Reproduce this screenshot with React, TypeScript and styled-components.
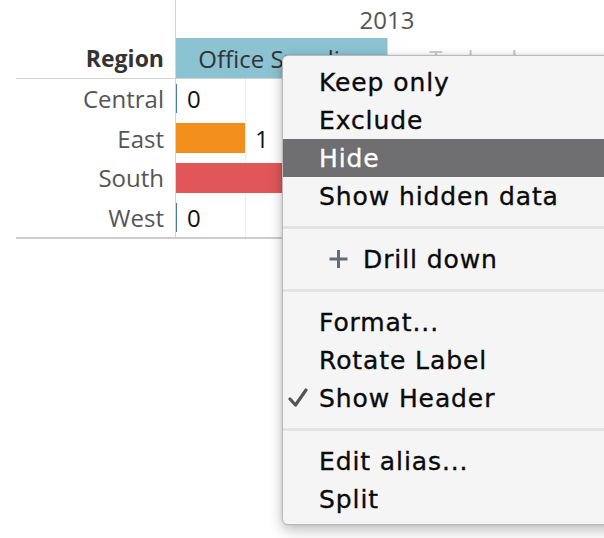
import React from "react";
import styled, { createGlobalStyle } from "styled-components";

const Global = createGlobalStyle`
  html, body { margin: 0; padding: 0; background: #fff; }
  body { font-family: "Open Sans", "Liberation Sans", sans-serif; }
`;

const Stage = styled.div`
  position: relative;
  width: 604px;
  height: 538px;
  overflow: hidden;
  background: #fff;
`;

const Chart = styled.div`
  display: flex;
  flex-direction: column;
  margin-left: 16px;
  width: 588px;
`;

const Row = styled.div<{ $h: number; $line?: boolean }>`
  display: flex;
  height: ${(p) => p.$h}px;
  box-sizing: content-box;
  border-bottom: ${(p) => (p.$line ? "1px solid #d2d2d2" : "none")};
`;

const Body = styled.div`
  display: flex;
  flex-direction: column;
  border-bottom: 2px solid #cdcdcd;
`;

const LabelCell = styled.div<{ $bold?: boolean }>`
  width: 160px;
  flex: none;
  box-sizing: border-box;
  border-right: 1px solid #d4d4d4;
  display: flex;
  align-items: center;
  justify-content: flex-end;
  padding-right: 11px;
  font-size: ${(p) => (p.$bold ? "23px" : "24px")};
  font-weight: ${(p) => (p.$bold ? 700 : 400)};
  color: ${(p) => (p.$bold ? "#333" : "#555")};
`;

const YearCell = styled.div`
  width: 422px;
  display: flex;
  align-items: center;
  justify-content: center;
  font-size: 24px;
  color: #555;
`;

const HeaderCell = styled.div<{ $selected?: boolean }>`
  width: 211px;
  flex: none;
  box-sizing: border-box;
  display: flex;
  align-items: center;
  justify-content: center;
  font-size: 24px;
  background: ${(p) => (p.$selected ? "#8bc3d3" : "#fff")};
  color: ${(p) => (p.$selected ? "#333" : "#c9c9c9")};
  border-left: ${(p) => (p.$selected ? "none" : "1px solid #d8d8d8")};
`;

const Pane = styled.div`
  width: 211px;
  flex: none;
  display: flex;
  align-items: center;
  background-image: linear-gradient(
    to right,
    transparent 69px,
    #ececec 69px,
    #ececec 70px,
    transparent 70px
  );
  background-size: 70px 100%;
`;

const EmptyPane = styled.div`
  width: 211px;
  flex: none;
  box-sizing: border-box;
  border-left: 1px solid #e4e4e4;
`;

const Bar = styled.div<{ $color: string }>`
  height: 30px;
  flex: none;
  background: ${(p) => p.$color};
`;

const Tick = styled.div`
  width: 1px;
  height: 29px;
  flex: none;
  background: #4e79a7;
`;

const Value = styled.span`
  margin-left: 10px;
  font-size: 24px;
  color: #111;
`;

const Menu = styled.div`
  position: absolute;
  left: 282px;
  top: 55px;
  width: 340px;
  box-sizing: border-box;
  padding: 7px 0 6px;
  background: #f5f5f5;
  border: 1px solid #b9b9b9;
  border-radius: 6px;
  box-shadow: 0 5px 14px rgba(0, 0, 0, 0.26), 0 0 3px rgba(0, 0, 0, 0.12);
  font-family: "DejaVu Sans", Verdana, sans-serif;
`;

const Item = styled.div<{ $active?: boolean }>`
  display: flex;
  align-items: center;
  height: 38px;
  background: ${(p) => (p.$active ? "#6f6e70" : "transparent")};
  color: ${(p) => (p.$active ? "#fff" : "#0a0a0a")};
  font-size: 25px;
  letter-spacing: 0.9px;
  -webkit-text-stroke: 0.35px currentColor;
  white-space: nowrap;
`;

const Gutter = styled.span`
  width: 36px;
  flex: none;
  box-sizing: border-box;
  padding-left: 5px;
  display: flex;
  align-items: center;
`;

const PlusSlot = styled.span`
  display: flex;
  align-items: center;
  margin-left: 10px;
  margin-right: 15px;
`;

const Separator = styled.div`
  height: 3px;
  margin: 11px 0;
  background: #e3e3e3;
`;

const rows: { name: string; value: number; color?: string }[] = [
  { name: "Central", value: 0 },
  { name: "East", value: 1, color: "#f28e1c" },
  { name: "South", value: 2, color: "#e15759" },
  { name: "West", value: 0 },
];

const Check = () => (
  <svg width="20" height="20" viewBox="0 0 20 20">
    <path d="M2 11 L7.5 17 L18 2" fill="none" stroke="#555" strokeWidth="3.2" strokeLinejoin="round" strokeLinecap="round" />
  </svg>
);

const Plus = () => (
  <svg width="19" height="18" viewBox="0 0 19 18">
    <path d="M0.5 9 H18.5 M9.5 0 V18" stroke="#656b74" strokeWidth="3" />
  </svg>
);

export default function App() {
  return (
    <Stage>
      <Global />
      <Chart>
        <Row $h={38}>
          <LabelCell />
          <YearCell>2013</YearCell>
        </Row>
        <Row $h={40} $line>
          <LabelCell $bold>Region</LabelCell>
          <HeaderCell $selected>Office Supplies</HeaderCell>
          <HeaderCell>Technology</HeaderCell>
        </Row>
        <Body>
          {rows.map((r) => (
            <Row key={r.name} $h={39.5}>
              <LabelCell>{r.name}</LabelCell>
              <Pane>
                {r.value === 0 ? (
                  <Tick />
                ) : (
                  <Bar $color={r.color!} style={{ width: r.value * 69 + (r.value - 1) }} />
                )}
                <Value>{r.value}</Value>
              </Pane>
              <EmptyPane />
            </Row>
          ))}
        </Body>
      </Chart>

      <Menu>
        <Item><Gutter />Keep only</Item>
        <Item><Gutter />Exclude</Item>
        <Item $active><Gutter />Hide</Item>
        <Item><Gutter />Show hidden data</Item>
        <Separator />
        <Item><Gutter /><PlusSlot><Plus /></PlusSlot>Drill down</Item>
        <Separator />
        <Item><Gutter />Format...</Item>
        <Item><Gutter />Rotate Label</Item>
        <Item><Gutter><Check /></Gutter>Show Header</Item>
        <Separator />
        <Item><Gutter />Edit alias...</Item>
        <Item><Gutter />Split</Item>
      </Menu>
    </Stage>
  );
}
